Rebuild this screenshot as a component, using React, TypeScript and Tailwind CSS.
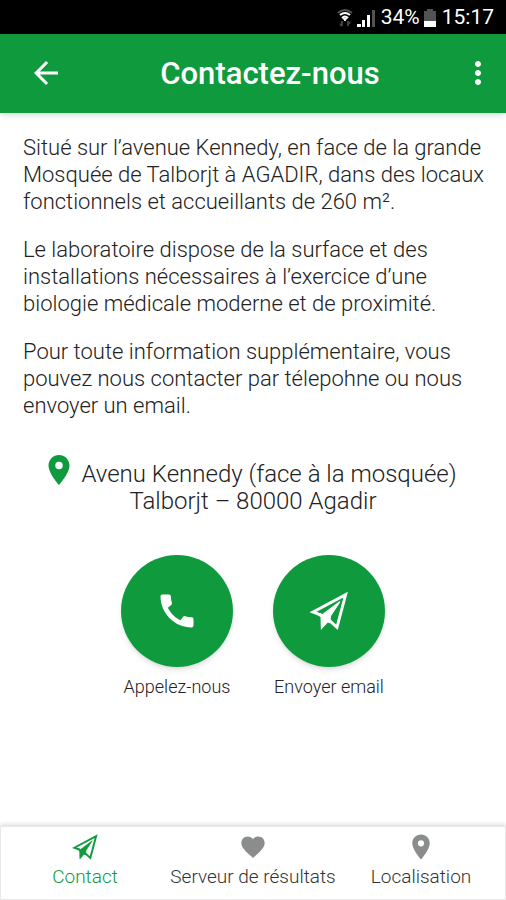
import React, { useState } from 'react';
import { MdArrowBack, MdCall, MdFavorite, MdLocationOn, MdMoreVert } from 'react-icons/md';

type TabId = 'contact' | 'results' | 'location';

const PaperPlane: React.FC<{ className?: string }> = ({ className }) => (
  <svg viewBox="0 0 116 116" className={className} fill="none" stroke="currentColor" strokeWidth="8" strokeLinejoin="miter" aria-hidden="true">
    <path d="M38 70 L14 61 L104 13 L80 103 L59 84" />
    <path d="M20 62 L40 68 L88 32 L62 72 L60 90 L54 88 L37 107 L36 74 Z" fill="currentColor" strokeWidth="3" />
  </svg>
);

const StatusBar: React.FC = () => (
  <div className="bg-black text-white h-[34px] shrink-0 flex items-center justify-end pr-3 pt-0.5 text-[21px]">
    <svg viewBox="0 0 16 20" className="w-4 h-5 mr-1" fill="none" stroke="currentColor" strokeWidth="2" aria-hidden="true">
      <path d="M1 5 Q8 -1 15 5" className="text-neutral-600" />
      <path d="M3 7 Q8 3 13 7" />
      <path d="M5 10 Q8 7 11 10" />
      <path d="M6 10 H10 L8 13 Z" fill="currentColor" strokeWidth="1" />
      <path d="M5 13 V18 M3 16 L5 18 M11 18 V13 M13 16 L11 13" className="text-neutral-700" />
    </svg>
    <svg viewBox="0 0 18 18" className="w-[18px] h-[18px] mr-1.5" fill="currentColor" aria-hidden="true">
      <path d="M0 15 H4 V18 H0 Z M5 11 H8 V18 H5 Z M10 6 H13 V18 H10 Z" />
      <path d="M15 1 H18 V18 H15 Z" className="text-neutral-600" />
    </svg>
    <span>34%</span>
    <svg viewBox="0 0 12 18" className="w-3 h-[18px] ml-1 mr-1.5" fill="currentColor" aria-hidden="true">
      <path d="M3 0 H9 V2 H12 V12 H0 V2 H3 Z" className="text-neutral-600" />
      <path d="M0 12 H12 V18 H0 Z" />
    </svg>
    <span>15:17</span>
  </div>
);

const paragraphs = [
  'Situé sur l’avenue Kennedy, en face de la grande Mosquée de Talborjt à AGADIR, dans des locaux fonctionnels et accueillants de 260 m².',
  'Le laboratoire dispose de la surface et des installations nécessaires à l’exercice d’une biologie médicale moderne et de proximité.',
  'Pour toute information supplémentaire, vous pouvez nous contacter par télepohne ou nous envoyer un email.',
];

const actions = [
  { label: 'Appelez-nous', href: 'tel:', icon: <MdCall className="w-11 h-11" /> },
  { label: 'Envoyer email', href: 'mailto:', icon: <PaperPlane className="w-[42px] h-[42px]" /> },
];

const tabs: { id: TabId; label: string; icon: React.ReactNode }[] = [
  { id: 'contact', label: 'Contact', icon: <PaperPlane className="w-7 h-7" /> },
  { id: 'results', label: 'Serveur de résultats', icon: <MdFavorite className="w-7 h-7" /> },
  { id: 'location', label: 'Localisation', icon: <MdLocationOn className="w-[30px] h-[30px]" /> },
];

const App: React.FC = () => {
  const [activeTab, setActiveTab] = useState<TabId>('contact');

  return (
    <div className="min-h-screen flex flex-col bg-white font-[Roboto,sans-serif] text-[#222222]">
      <StatusBar />

      <header className="bg-[#109a3e] text-white h-[79px] shrink-0 flex items-center pl-7 pr-2.5 pb-0.5 shadow-md">
        <button type="button" aria-label="Retour">
          <MdArrowBack className="w-9 h-9" />
        </button>
        <h1 className="flex-1 text-center text-[31px] font-medium pl-4 pt-1">Contactez-nous</h1>
        <button type="button" aria-label="Menu">
          <MdMoreVert className="w-9 h-9" />
        </button>
      </header>

      <main className="flex-1 pt-[21px]">
        <div className="pl-[23px] pr-4 space-y-[21px] text-[22px] leading-[27px] font-light">
          {paragraphs.map((text) => (
            <p key={text}>{text}</p>
          ))}
        </div>

        <address className="not-italic text-center mt-[33px] px-6 text-2xl leading-[27px] font-light">
          <MdLocationOn className="inline-block align-bottom w-9 h-9 mr-1 text-[#109a3e]" />
          <span className="mr-2">Avenu Kennedy (face à la mosquée)</span>
          <br />
          Talborjt – 80000 Agadir
        </address>

        <div className="flex justify-center gap-10 mt-10">
          {actions.map(({ label, href, icon }) => (
            <a key={label} href={href} className="w-28 flex flex-col items-center">
              <span className="w-28 h-28 rounded-full bg-[#109a3e] text-white flex items-center justify-center shadow-md">
                {icon}
              </span>
              <span className="mt-2 text-lg leading-6 whitespace-nowrap font-light">{label}</span>
            </a>
          ))}
        </div>
      </main>

      <nav className="h-[74px] shrink-0 grid grid-cols-3 border border-[#e8e8e8] shadow-[0_-2px_4px_rgba(0,0,0,0.12)]">
        {tabs.map(({ id, label, icon }) => (
          <button
            key={id}
            type="button"
            onClick={() => setActiveTab(id)}
            className={`flex flex-col items-center pt-1.5 text-[19px] leading-6 whitespace-nowrap font-light ${
              activeTab === id ? 'text-[#109a3e]' : 'text-[#333333]'
            }`}
          >
            <span className={`h-7 flex items-center ${activeTab === id ? '' : 'text-[#8a8d8c]'}`}>{icon}</span>
            <span className="mt-1">{label}</span>
          </button>
        ))}
      </nav>
    </div>
  );
};

export default App;
